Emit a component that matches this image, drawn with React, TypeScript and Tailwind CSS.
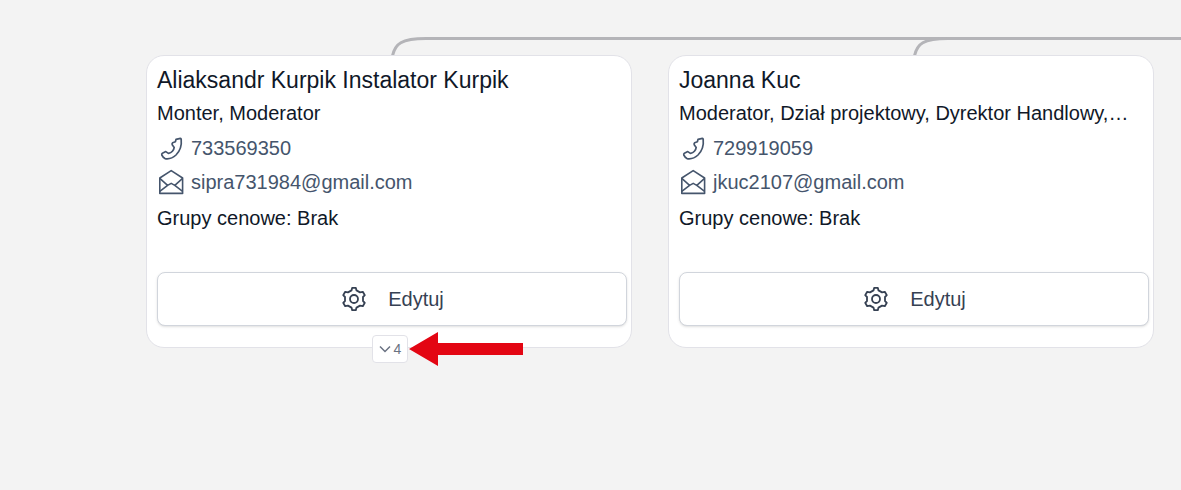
import React from 'react';

const users = [
    {
        id: 1,
        name: 'Aliaksandr Kurpik Instalator Kurpik',
        roles: 'Monter, Moderator',
        phone: '733569350',
        email: 'sipra731984@gmail.com',
        groups: 'Brak',
        children: 4,
    },
    {
        id: 2,
        name: 'Joanna Kuc',
        roles: 'Moderator, Dział projektowy, Dyrektor Handlowy,…',
        phone: '729919059',
        email: 'jkuc2107@gmail.com',
        groups: 'Brak',
        children: 0,
    },
];

function PhoneIcon() {
    return (
        <svg className="h-7 w-7 shrink-0" viewBox="0 0 28 28" fill="none" stroke="currentColor" strokeWidth="1.7" strokeLinejoin="round" aria-hidden="true">
            <path d="M19 5.4 L23.4 4.4 Q24.2 4.4 24.2 5.4 C24.8 11 23 17 19 21 C15.8 24 11.6 25.2 8 24.6 Q6 23.4 4.8 21 Q4.4 19.8 5.4 19.2 L8.8 17.6 L11.4 19.4 Q14 18.8 15.4 17.2 Q17 15.4 17.2 13.4 L15.2 10.8 Q14.8 9.6 15.6 8.8 L18.4 7.8 Z" />
        </svg>
    );
}

function MailIcon() {
    return (
        <svg className="h-7 w-7 shrink-0" viewBox="0 0 28 28" fill="none" stroke="currentColor" strokeWidth="1.6" strokeLinejoin="round" aria-hidden="true">
            <path d="M2.8 10 L14.2 2.6 L25.6 10 V25.4 H2.8 Z" />
            <path d="M2.8 10.4 L10.6 17.4 L14.2 15.4 L17.8 17.4 L25.6 10.4 M2.8 23.4 L10.6 17.4 M25.6 23.4 L17.8 17.4" />
        </svg>
    );
}

function CogIcon() {
    return (
        <svg className="h-7 w-7 shrink-0" viewBox="0 0 28 28" fill="none" stroke="currentColor" strokeWidth="1.8" strokeLinejoin="round" aria-hidden="true">
            <path d="M12.2 2.8 H15.8 L16.5 5.4 L20 7.4 L22.8 6.8 L24.8 10.2 L23 12 V16 L24.8 17.8 L22.8 21.2 L20 20.6 L16.5 22.6 L15.8 25.2 H12.2 L11.5 22.6 L8 20.6 L5.2 21.2 L3.2 17.8 L5 16 V12 L3.2 10.2 L5.2 6.8 L8 7.4 L11.5 5.4 Z" />
            <circle cx="14" cy="14" r="4" />
        </svg>
    );
}

function UserCard({ user }: any) {
    return (
        <div className="relative min-w-0 flex-1">
            {/* line to the parent node */}
            <svg className="pointer-events-none absolute bottom-full left-1/2 h-5 w-[2000px]" fill="none" stroke="#b4b4b8" strokeWidth="3" aria-hidden="true">
                <path d="M3.5 21 C6 9 12 3.5 37 3.5 H2000" />
            </svg>
            <div className="rounded-[18px] border border-[#e2e2e8] bg-white pt-2 pr-1 pb-[21px] pl-[10px] text-xl text-gray-900">
                <h2 className="text-[23px] leading-8">{user.name}</h2>
                <p className="mb-px leading-[34px]">{user.roles}</p>
                <a href={'tel:' + user.phone} className="flex h-[34px] items-center gap-[6px] text-slate-600">
                    <PhoneIcon />
                    {user.phone}
                </a>
                <a href={'mailto:' + user.email} className="flex h-[34px] items-center gap-[6px] text-slate-600">
                    <MailIcon />
                    {user.email}
                </a>
                <p className="leading-[38px]">Grupy cenowe: {user.groups}</p>
                <button type="button" className="mt-[35px] flex h-[54px] w-full items-center justify-center gap-5 rounded-lg border border-gray-300 bg-white text-gray-700 shadow-sm hover:bg-gray-50">
                    <CogIcon />
                    Edytuj
                </button>
            </div>
            {user.children > 0 && (
                <div className="absolute top-full left-1/2 -mt-4 -ml-[17px] flex items-center">
                    <button type="button" aria-label="Rozwiń" className="flex h-7 w-9 items-center justify-center gap-[3px] rounded border border-[#e2e2e8] bg-white text-sm text-gray-500">
                        <svg className="h-3 w-3" viewBox="0 0 12 12" fill="none" stroke="currentColor" strokeWidth="1.5" aria-hidden="true">
                            <path d="M1 3.5 L6 8.5 L11 3.5" />
                        </svg>
                        {user.children}
                    </button>
                    <svg className="ml-px h-[34px] w-[114px]" viewBox="0 0 114 34" fill="#e30613" aria-hidden="true">
                        <path d="M0 17 L29 0 V11 H114 V23 H29 V34 Z" />
                    </svg>
                </div>
            )}
        </div>
    );
}

export default function App() {
    return (
        <main className="flex min-h-screen items-start gap-9 overflow-hidden bg-[#f3f3f3] pt-[55px] pr-[27px] pl-[146px] font-['Liberation_Sans',Arial,sans-serif]">
            {users.map((user) => (
                <UserCard key={user.id} user={user} />
            ))}
        </main>
    );
}
